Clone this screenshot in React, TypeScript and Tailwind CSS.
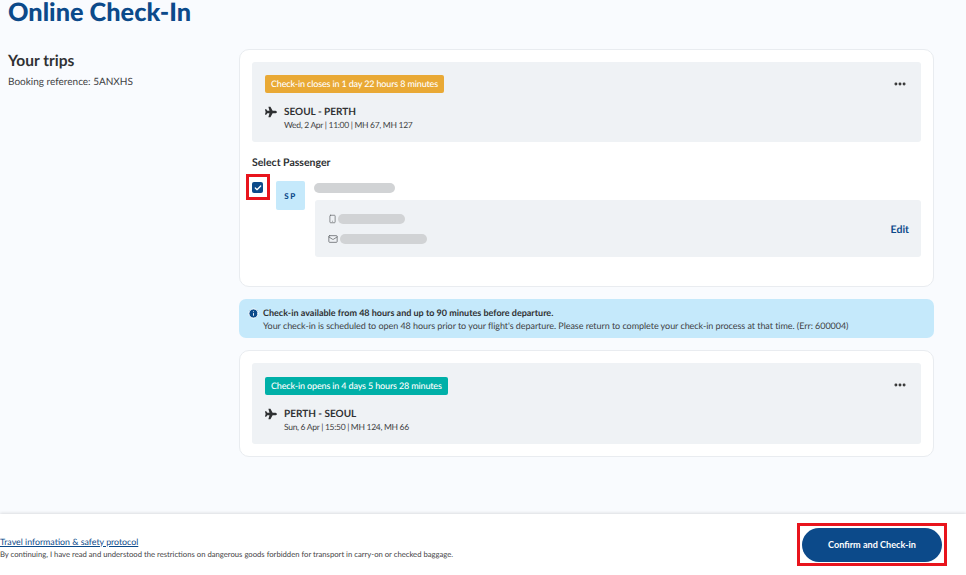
import { Check, Info, Mail, MoreHorizontal, Smartphone } from 'lucide-react';
import { FaPlane } from 'react-icons/fa';

function Redacted({ className }: { className: string }) {
  return <div className={`h-[10px] rounded-full bg-[#d1d3d5] ${className}`} />;
}

function TripSummary({
  badge,
  badgeColor,
  route,
  details,
  spacing,
}: {
  badge: string;
  badgeColor: string;
  route: string;
  details: string;
  spacing: string;
}) {
  return (
    <div className={`relative rounded-[3px] bg-[#eff2f5] pl-[13px] ${spacing}`}>
      <div className={`h-[18px] w-fit rounded-[2px] px-[6px] text-[9px] font-medium leading-[18px] tracking-[-0.15px] text-white ${badgeColor}`}>
        {badge}
      </div>
      <div className="mt-[12px] flex gap-[7px]">
        <FaPlane className="mt-[1px] h-[12px] w-[12px] text-[#2f3133]" />
        <div>
          <div className="text-[10px] font-bold leading-[14px] text-[#2f3133]">{route}</div>
          <div className="text-[8.5px] leading-[13px] tracking-[-0.3px] text-[#3f4244]">{details}</div>
        </div>
      </div>
      <MoreHorizontal className="absolute right-[14px] top-[15px] h-[14px] w-[14px] text-[#333]" strokeWidth={3} />
    </div>
  );
}

export default function App() {
  return (
    <div className="flex h-[575px] w-[966px] flex-col overflow-hidden bg-[#f9fbfe] font-['Lato',sans-serif] text-[#2f3133] [text-rendering:geometricPrecision]">
      <main className="flex-1 px-[8px]">
        <h1 className="h-[49px] text-[25.3px] font-black leading-[25px] text-[#0c4a8a]">Online Check-In</h1>
        <div className="flex">
          <aside className="w-[231px] pt-[4px]">
            <h2 className="text-[15.5px] font-bold leading-[16px]">Your trips</h2>
            <p className="mt-[6px] text-[10px] leading-[14px] text-[#3f4244]">Booking reference: 5ANXHS</p>
          </aside>

          <div className="flex w-[695px] flex-col">
            <section className="h-[238px] rounded-[10px] border border-[#e9ecf0] bg-white px-[12px] pt-[12px]">
              <TripSummary
                badge="Check-in closes in 1 day 22 hours 8 minutes"
                badgeColor="bg-[#e9a935]"
                route="SEOUL - PERTH"
                details="Wed, 2 Apr | 11:00 | MH 67, MH 127"
                spacing="h-[80px] pt-[13px]"
              />
              <div className="mt-[15px] text-[10.5px] font-bold leading-[13px]">Select Passenger</div>
              <div className="mt-[11px] flex">
                <div className="relative mt-[1px] flex h-[11px] w-[11px] items-center justify-center rounded-[2px] bg-[#0c4a8a]">
                  <Check className="h-[8px] w-[8px] text-white" strokeWidth={4} />
                  <div className="absolute -left-[6px] -top-[8px] h-[26px] w-[24px] border-[3px] border-[#e8141c]" />
                </div>
                <div className="ml-[13px] flex h-[29px] w-[29px] items-center justify-center rounded-[2px] bg-[#c5e9fb] text-[8px] font-black tracking-[1.5px] text-[#0c4a8a]">
                  SP
                </div>
                <div className="ml-[10px] flex-1">
                  <Redacted className="ml-[-1px] mt-[2px] w-[81px]" />
                  <div className="mt-[7px] flex h-[57px] items-center justify-between rounded-[3px] bg-[#eff2f5] pl-[13px] pr-[12px]">
                    <div className="flex flex-col gap-[10px]">
                      <div className="flex items-center gap-[1px]">
                        <Smartphone className="h-[10px] w-[9px] text-[#6b6f72]" />
                        <Redacted className="w-[67px]" />
                      </div>
                      <div className="flex items-center gap-[2px]">
                        <Mail className="h-[10px] w-[10px] text-[#6b6f72]" />
                        <Redacted className="w-[87px]" />
                      </div>
                    </div>
                    <span className="mt-[4px] text-[10.5px] font-bold text-[#0c4a8a]">Edit</span>
                  </div>
                </div>
              </div>
            </section>

            <div className="mt-[12px] flex h-[39px] gap-[4px] rounded-[7px] bg-[#c5e9fb] pl-[9px] pt-[8px] text-[9px] leading-[12.5px]">
              <Info className="mt-[1px] h-[11px] w-[11px] fill-[#0c4a8a] text-white" />
              <div>
                <div className="font-bold">Check-in available from 48 hours and up to 90 minutes before departure.</div>
                <div className="tracking-[-0.05px] text-[#3f4244]">
                  Your check-in is scheduled to open 48 hours prior to your flight's departure. Please return to complete your check-in process at that time. (Err: 600004)
                </div>
              </div>
            </div>

            <section className="mt-[12px] h-[107px] rounded-[10px] border border-[#e9ecf0] bg-white px-[12px] pt-[12px]">
              <TripSummary
                badge="Check-in opens in 4 days 5 hours 28 minutes"
                badgeColor="bg-[#00b0a8]"
                route="PERTH - SEOUL"
                details="Sun, 6 Apr | 15:50 | MH 124, MH 66"
                spacing="h-[81px] pt-[14px]"
              />
            </section>
          </div>
        </div>
      </main>

      <footer className="flex h-[61px] items-center justify-between bg-white pr-[24px] shadow-[0_-1px_3px_rgba(0,0,0,0.12)]">
        <div className="pt-[5px]">
          <a className="block text-[8.8px] leading-[14px] text-[#0c4a8a] underline">Travel information &amp; safety protocol</a>
          <p className="text-[7.7px] leading-[11px] text-[#3f4244]">
            By continuing, I have read and understood the restrictions on dangerous goods forbidden for transport in carry-on or checked baggage.
          </p>
        </div>
        <button className="relative mt-[1px] h-[34px] w-[140px] rounded-full bg-[#0c4a8a] text-[9.1px] font-bold text-white">
          Confirm and Check-in
          <span className="absolute -left-[5px] -top-[5px] h-[43px] w-[150px] border-[3px] border-[#e8141c]" />
        </button>
      </footer>
    </div>
  );
}
